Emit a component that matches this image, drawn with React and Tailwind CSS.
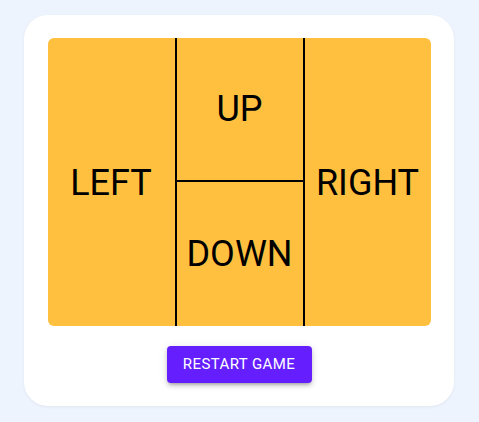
export default function App() {
  return (
    <div className="min-h-[422px] w-[479px] bg-[#edf4fe] pt-[15px] pl-[24px] font-['Roboto',sans-serif]">
      <div className="w-[430px] h-[391px] rounded-[24px] bg-white shadow-[0_1px_3px_rgba(0,0,0,0.06)] pt-[23px] px-[24px] flex flex-col items-center">
        <div className="w-[383px] h-[288px] rounded-[6px] bg-[#ffc03f] flex text-black text-[36px] leading-none">
          <div className="w-[129px] pt-[2px] flex items-center justify-center border-r-2 border-black">LEFT</div>
          <div className="w-[128px] flex flex-col border-r-2 border-black">
            <div className="h-[144px] flex items-center justify-center border-b-2 border-black">UP</div>
            <div className="flex-1 flex items-center justify-center">DOWN</div>
          </div>
          <div className="flex-1 pt-[2px] flex items-center justify-center">RIGHT</div>
        </div>
        <button className="mt-[20px] w-[145px] h-[37px] rounded-[4px] bg-[#651fff] text-white text-[15px] tracking-[0.4px] shadow-[0_3px_3px_-2px_rgba(0,0,0,0.2),0_3px_4px_0_rgba(0,0,0,0.14),0_1px_8px_0_rgba(0,0,0,0.12)]">
          RESTART GAME
        </button>
      </div>
    </div>
  );
}
